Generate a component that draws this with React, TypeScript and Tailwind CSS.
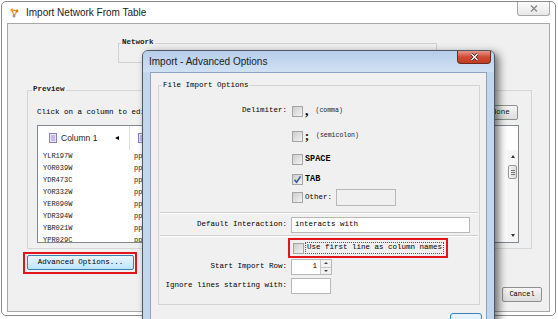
import React from 'react';

function Check({ checked = false }: { checked?: boolean }) {
  return (
    <span className="flex h-[11px] w-[11px] shrink-0 items-center justify-center border border-[#a4a4a4] bg-linear-to-br from-[#cdcdcd] to-[#f3f3f3]">
      {checked && (
        <svg width="9" height="9" viewBox="0 0 9 9">
          <path d="M1.5 4.8 L3.6 7.2 L7.6 1.4" fill="none" stroke="#3a5a9c" strokeWidth="1.6" />
        </svg>
      )}
    </span>
  );
}

function Label({ children }: { children?: React.ReactNode }) {
  return (
    <span className="w-[128px] shrink-0 text-right font-['Liberation_Mono',monospace] text-[7.5px] leading-none text-black">
      {children}
    </span>
  );
}

const rows = ['YLR197W', 'YOR039W', 'YDR473C', 'YOR332W', 'YER090W', 'YDR394W', 'YBR021W', 'YPR029C'];

function ColumnIcon() {
  return (
    <svg width="8" height="10" viewBox="0 0 8 10">
      <rect x="0.5" y="0.5" width="7" height="9" fill="#e9e4f7" stroke="#8a7fbf" />
      <path d="M2 3h4M2 5h4M2 7h4" stroke="#8a7fbf" strokeWidth="0.8" />
    </svg>
  );
}

export default function App() {
  return (
    <div className="relative h-[319px] w-[558px] overflow-hidden bg-white">
      {/* Main window */}
      <div className="ml-[1px] mt-[1px] flex h-[315px] w-[555px] flex-col rounded-[5px] border border-[#8a8a8a] bg-white">
        {/* Title bar */}
        <div className="flex h-[21px] shrink-0 items-center">
          <svg className="ml-[8px]" width="10" height="10" viewBox="0 0 10 10">
            <path d="M2 2 L7 3 L4 8 Z" fill="none" stroke="#e0902a" strokeWidth="1.2" />
            <circle cx="2" cy="2" r="1.6" fill="#f0a030" />
            <circle cx="7" cy="3" r="1.4" fill="#d87a1a" />
            <circle cx="4" cy="8" r="1.5" fill="#9a9a9a" />
          </svg>
          <span className="ml-[6px] font-['Liberation_Sans',Arial,sans-serif] text-[10px] leading-none text-[#1a1a1a]">
            Import Network From Table
          </span>
          <div className="ml-auto mr-[5px] flex h-[14px] w-[33px] items-center justify-center self-start rounded-b-[3px] border border-t-0 border-[#a6a6a6] bg-linear-to-b from-[#fbfbfb] to-[#e8e8e8]">
            <svg width="8" height="7" viewBox="0 0 8 7">
              <path d="M1 0.5 L7 6.5 M7 0.5 L1 6.5" stroke="#8a8a8a" strokeWidth="1.4" />
            </svg>
          </div>
        </div>

        {/* Content */}
        <div className="mx-[5px] mb-[3px] flex flex-1 flex-col border border-[#a8a8a8] bg-[#f0f0f0]">
          {/* Network group */}
          <div className="relative ml-[110px] mt-[19px] h-[20px] w-[319px] shrink-0 border border-[#d2d2d2]">
            <span className="absolute -top-[6px] left-[2px] bg-[#f0f0f0] px-[1px] font-['Liberation_Mono',monospace] text-[7.5px] font-bold leading-[9px] text-[#222]">
              Network
            </span>
          </div>

          {/* Preview group */}
          <div className="relative ml-[19px] mt-[27px] h-[159px] w-[505px] shrink-0 border border-[#d6d6d6]">
            <span className="absolute -top-[6px] left-[4px] bg-[#f0f0f0] px-[1px] font-['Liberation_Mono',monospace] text-[7.5px] font-bold leading-[9px] text-[#222]">
              Preview
            </span>
            <div className="ml-[9px] mt-[14px] flex h-[15px] w-[482px] items-center justify-between">
              <span className="font-['Liberation_Mono',monospace] text-[7.5px] leading-none text-black">
                Click on a column to edit it.
              </span>
              <div className="mr-[1px] flex h-[15px] w-[66px] items-center justify-center rounded-[2px] border border-[#8e8f8f] bg-linear-to-b from-[#f6f6f6] to-[#dddddd] font-['Liberation_Mono',monospace] text-[7.5px] leading-none text-[#111]">
                Select None
              </div>
            </div>

            {/* Table */}
            <div className="ml-[9px] mt-[5px] flex h-[118px] w-[482px] flex-col overflow-hidden border border-[#828790] bg-white">
              <div className="flex h-[24px] shrink-0">
                <div className="flex w-[92px] items-center border-r border-[#dedede]">
                  <span className="ml-[11px]">
                    <ColumnIcon />
                  </span>
                  <span className="ml-[4px] font-['Liberation_Sans',Arial,sans-serif] text-[8.5px] leading-none text-[#222]">
                    Column 1
                  </span>
                  <span className="ml-auto mr-[10px] h-0 w-0 border-y-[2.5px] border-r-[4px] border-y-transparent border-r-black" />
                </div>
                <div className="flex items-center pl-[8px]">
                  <ColumnIcon />
                  <span className="ml-[4px] font-['Liberation_Sans',Arial,sans-serif] text-[8.5px] leading-none text-[#222]">
                    Column 2
                  </span>
                </div>
              </div>
              <div className="flex flex-1 overflow-hidden">
                <div className="flex flex-1 flex-col">
                  {rows.map(r => (
                    <div key={r} className="flex h-[12px] shrink-0 items-center font-['Liberation_Mono',monospace] text-[7px] leading-none text-[#222]">
                      <span className="w-[92px] pl-[5px]">{r}</span>
                      <span className="pl-[4px]">pp</span>
                    </div>
                  ))}
                </div>
                <div className="flex w-[11px] shrink-0 flex-col items-center bg-[#f6f6f6]">
                  <div className="flex h-[13px] items-center">
                    <span className="h-0 w-0 border-x-[2.5px] border-b-[3px] border-x-transparent border-b-[#333]" />
                  </div>
                  <div className="mt-[2px] flex h-[14px] w-[9px] flex-col items-center justify-center gap-[1px] rounded-[2px] border border-[#9a9a9a] bg-linear-to-r from-[#f4f4f4] to-[#dcdcdc]">
                    <span className="h-px w-[4px] bg-[#777]" />
                    <span className="h-px w-[4px] bg-[#777]" />
                    <span className="h-px w-[4px] bg-[#777]" />
                  </div>
                  <div className="flex-1" />
                  <div className="flex h-[13px] items-center">
                    <span className="h-0 w-0 border-x-[2.5px] border-t-[3px] border-x-transparent border-t-[#333]" />
                  </div>
                </div>
              </div>
            </div>
          </div>

          {/* Advanced options */}
          <div className="ml-[15px] mt-[3px] self-start border-2 border-[#e3141b] pb-[2px] pl-[2px] pr-[1px] pt-[1px]">
            <div className="flex h-[15px] w-[107px] items-center justify-center rounded-[2px] border border-[#3c7fb1] bg-linear-to-b from-[#eaf6fd] to-[#bde4fb] font-['Liberation_Mono',monospace] text-[7.5px] leading-none text-black">
              Advanced Options...
            </div>
          </div>

          <div className="mt-[13px] flex justify-end pr-[7px]">
            <div className="flex h-[15px] w-[40px] items-center justify-center rounded-[2px] border border-[#8e8f8f] bg-linear-to-b from-[#f6f6f6] to-[#dddddd] font-['Liberation_Mono',monospace] text-[7px] leading-none text-black">
              Cancel
            </div>
          </div>
        </div>
      </div>

      {/* Dialog window on top */}
      <div className="absolute left-[142px] top-[50px] flex h-[300px] w-[353px] flex-col rounded-t-[6px] border border-[#4d5866] bg-[#c2d6ec] shadow-[4px_3px_8px_rgba(0,0,0,0.55)]">
        <div className="flex h-[21px] shrink-0 items-center rounded-t-[5px] bg-linear-to-b from-[#b6cde9] to-[#d0e1f4]">
          <span className="ml-[6px] font-['Liberation_Sans',Arial,sans-serif] text-[10px] leading-none text-[#1a1a1a]">
            Import - Advanced Options
          </span>
          <div className="ml-auto mr-[3px] flex h-[13px] w-[34px] items-center justify-center self-start rounded-b-[4px] border border-t-0 border-[#6a2a20] bg-linear-to-b from-[#e6958a] via-[#cf4a35] to-[#c43a22]">
            <svg width="9" height="8" viewBox="0 0 9 8">
              <path d="M1.5 1 L7.5 7 M7.5 1 L1.5 7" stroke="#3a1510" strokeWidth="2.6" />
              <path d="M1.5 1 L7.5 7 M7.5 1 L1.5 7" stroke="#ffffff" strokeWidth="1.4" />
            </svg>
          </div>
        </div>

        <div className="mx-[7px] flex flex-1 flex-col border border-[#8ea3bf] bg-[#f0f0f0]">
          {/* File Import Options group */}
          <div className="relative ml-[7px] mt-[12px] flex h-[220px] w-[322px] shrink-0 flex-col border border-[#d4d4d4] pt-[13px]">
            <span className="absolute -top-[5px] left-[3px] bg-[#f0f0f0] px-[1px] font-['Liberation_Mono',monospace] text-[7.5px] leading-[9px] text-black">
              File Import Options
            </span>

            <div className="flex h-[24px] items-center">
              <Label>Delimiter:</Label>
              <span className="ml-[5px]">
                <Check />
              </span>
              <span className="ml-[2px] font-['Liberation_Serif',serif] text-[14px] font-bold leading-none text-black">,</span>
              <span className="ml-[7px] font-['Liberation_Mono',monospace] text-[6.5px] leading-none text-[#222]">(comma)</span>
            </div>
            <div className="flex h-[26px] items-center">
              <Label />
              <span className="ml-[5px]">
                <Check />
              </span>
              <span className="ml-[2px] font-['Liberation_Serif',serif] text-[12px] font-bold leading-none text-black">;</span>
              <span className="ml-[7px] font-['Liberation_Mono',monospace] text-[6.5px] leading-none text-[#222]">(semicolon)</span>
            </div>
            <div className="flex h-[21px] items-center">
              <Label />
              <span className="ml-[5px]">
                <Check />
              </span>
              <span className="ml-[2px] font-['Liberation_Mono',monospace] text-[8.5px] font-bold leading-none text-black">SPACE</span>
            </div>
            <div className="flex h-[18px] items-center">
              <Label />
              <span className="ml-[5px]">
                <Check checked />
              </span>
              <span className="ml-[2px] font-['Liberation_Mono',monospace] text-[8.5px] font-bold leading-none text-black">TAB</span>
            </div>
            <div className="flex h-[19px] items-center">
              <Label />
              <span className="ml-[5px]">
                <Check />
              </span>
              <span className="ml-[2px] font-['Liberation_Mono',monospace] text-[7.5px] leading-none text-black">Other:</span>
              <div className="ml-[4px] h-[17px] w-[60px] border border-[#b8b8b8] bg-[#f0f0f0]" />
            </div>

            <div className="h-[9px] px-[1px]">
              <div className="mt-[5px] h-[2px] border-b border-t border-b-white border-t-[#d0d0d0]" />
            </div>

            <div className="flex h-[17px] items-center">
              <Label>Default Interaction:</Label>
              <div className="ml-[4px] flex h-[16px] w-[179px] items-center border border-[#b8b8b8] bg-white pl-[3px] font-['Liberation_Mono',monospace] text-[7.5px] leading-none text-black">
                interacts with
              </div>
            </div>

            <div className="h-[5px] px-[1px]">
              <div className="mt-[2px] h-[2px] border-b border-t border-b-white border-t-[#d0d0d0]" />
            </div>

            <div className="flex h-[20px] items-center">
              <Label />
              <div className="ml-[1px] flex h-[20px] w-[160px] items-center border-2 border-[#e3141b]">
                <span className="ml-[3px]">
                  <Check />
                </span>
                <span className="ml-[1px] flex h-[12px] items-center border border-dotted border-[#555] px-[1px] font-['Liberation_Mono',monospace] text-[7.5px] leading-none text-black">
                  Use first line as column names
                </span>
              </div>
            </div>

            <div className="flex h-[18px] items-center">
              <Label>Start Import Row:</Label>
              <div className="ml-[4px] flex h-[16px] w-[41px] border border-[#b8b8b8] bg-white">
                <span className="flex flex-1 items-center justify-end pr-[3px] font-['Liberation_Mono',monospace] text-[7.5px] leading-none text-black">
                  1
                </span>
                <div className="flex w-[11px] flex-col border-l border-[#c8c8c8]">
                  <div className="flex flex-1 items-center justify-center border-b border-[#c8c8c8] bg-[#f2f2f2]">
                    <span className="h-0 w-0 border-x-[2px] border-b-[2.5px] border-x-transparent border-b-[#444]" />
                  </div>
                  <div className="flex flex-1 items-center justify-center bg-[#f2f2f2]">
                    <span className="h-0 w-0 border-x-[2px] border-t-[2.5px] border-x-transparent border-t-[#444]" />
                  </div>
                </div>
              </div>
            </div>

            <div className="flex h-[20px] items-center">
              <Label>Ignore lines starting with:</Label>
              <div className="ml-[4px] h-[16px] w-[40px] border border-[#b8b8b8] bg-white" />
            </div>
          </div>

          <div className="mt-[8px] flex justify-end pr-[4px]">
            <div className="h-[20px] w-[32px] rounded-[3px] border border-[#3c7fb1] bg-linear-to-b from-[#eaf6fd] to-[#bee6fd]" />
          </div>
        </div>
      </div>
    </div>
  );
}
